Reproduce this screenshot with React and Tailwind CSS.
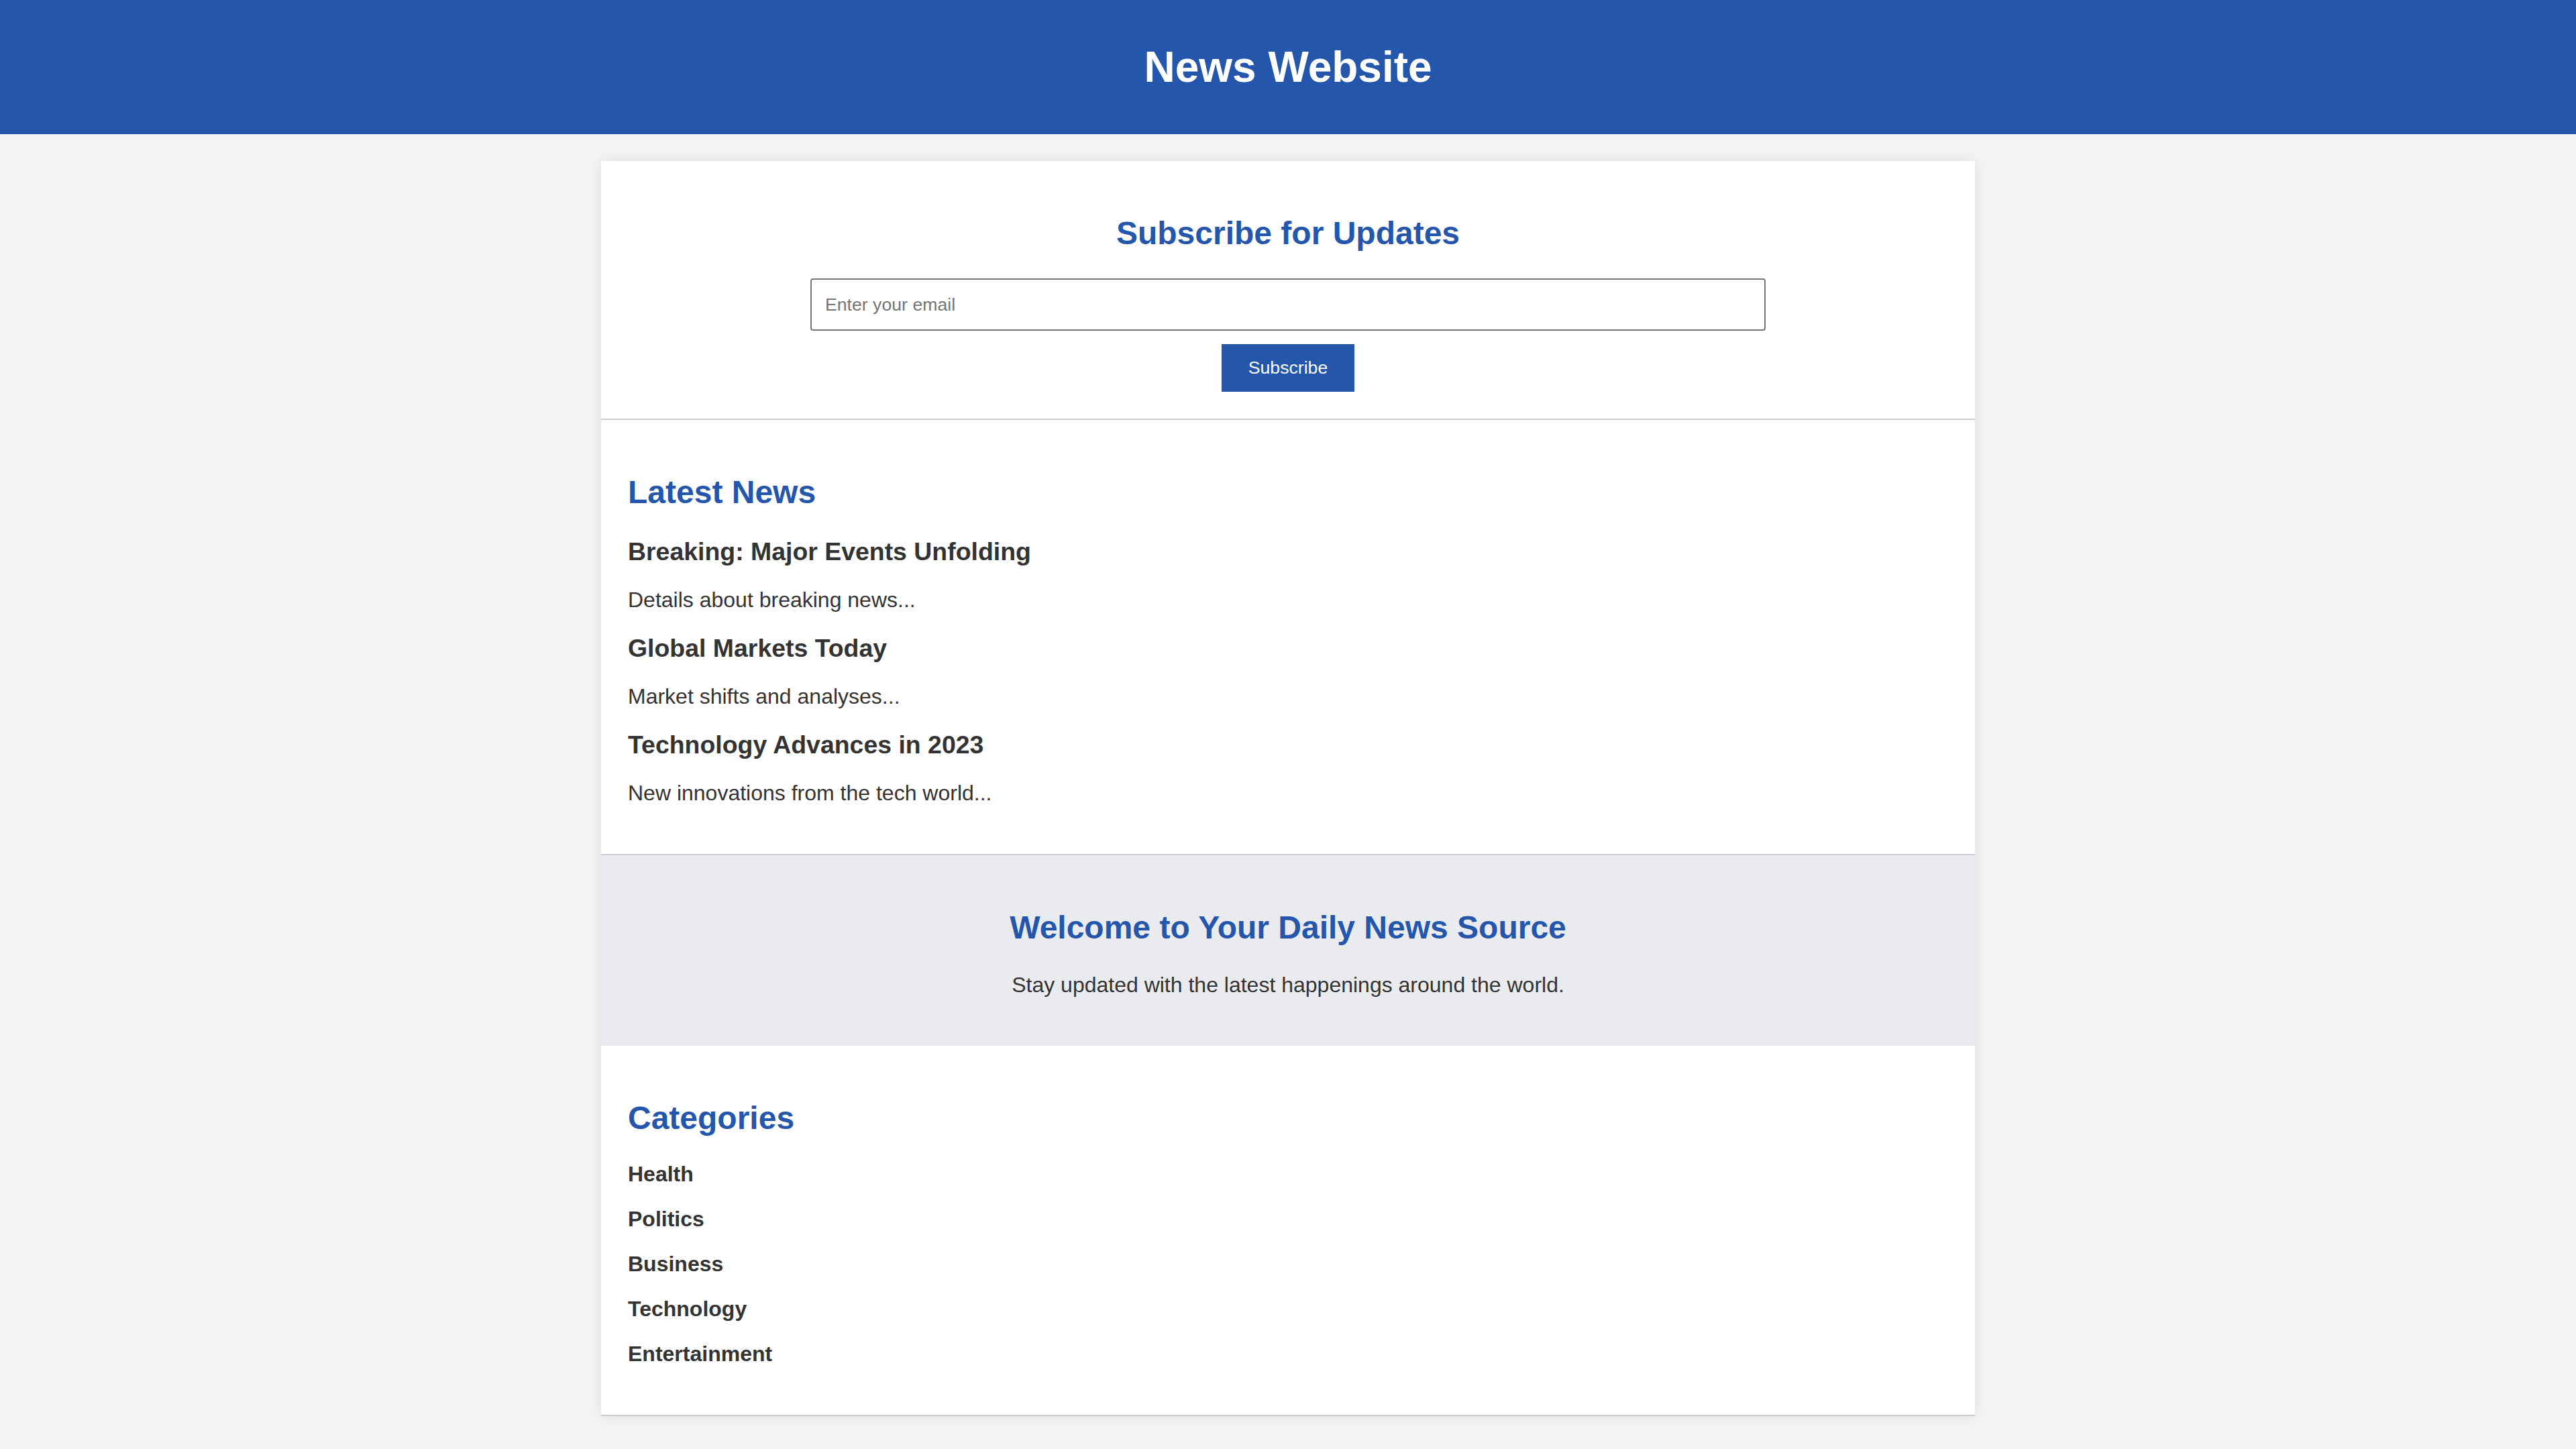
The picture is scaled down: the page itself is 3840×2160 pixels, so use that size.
export default function App() {
  const news = [
    ["Breaking: Major Events Unfolding", "Details about breaking news..."],
    ["Global Markets Today", "Market shifts and analyses..."],
    ["Technology Advances in 2023", "New innovations from the tech world..."],
  ];
  const cats = ["Health", "Politics", "Business", "Technology", "Entertainment"];
  return (
    <div className="min-h-screen bg-[#f4f4f4] font-['Liberation_Sans',Arial,sans-serif] leading-[normal] text-[#333333]">
      <header className="h-[200px] bg-[#2456ac] flex items-center justify-center">
        <h1 className="text-[64px] font-bold text-white leading-[normal]">News Website</h1>
      </header>
      <main className="w-[2048px] mx-auto mt-[40px] bg-white shadow-[0_0_20px_rgba(0,0,0,0.1)]">
        <section className="p-[40px] text-center border-b-2 border-[#cccccc]">
          <h2 className="mt-[40px] mb-[40px] text-[48px] font-bold text-[#2456ac]">Subscribe for Updates</h2>
          <input
            type="email"
            placeholder="Enter your email"
            className="block mx-auto w-[1424px] h-[78px] px-[20px] border-2 border-[#767676] rounded-[4px] text-[26.67px] placeholder:text-[#757575] bg-white outline-none"
          />
          <button className="mt-[20px] bg-[#2456ac] text-white text-[26.67px] px-[40px] py-[20px] leading-[normal]">
            Subscribe
          </button>
        </section>
        <section className="p-[40px] border-b-2 border-[#cccccc]">
          <h2 className="mt-[40px] mb-[40px] text-[48px] font-bold text-[#2456ac]">Latest News</h2>
          <div className="flex flex-col">
            {news.map(([t, d], i) => (
              <article key={i}>
                <h3 className="text-[37.44px] font-bold text-[#333333]">{t}</h3>
                <p className="mt-[32px] mb-[32px] text-[32px]">{d}</p>
              </article>
            ))}
          </div>
        </section>
        <section className="p-[40px] text-center bg-[#e9ebee]">
          <h2 className="mt-[40px] mb-[40px] text-[48px] font-bold text-[#2456ac]">Welcome to Your Daily News Source</h2>
          <p className="mb-[32px] text-[32px]">Stay updated with the latest happenings around the world.</p>
        </section>
        <section className="p-[40px] border-b-2 border-[#cccccc]">
          <h2 className="mt-[40px] mb-[38px] text-[48px] font-bold text-[#2456ac]">Categories</h2>
          <ul className="mb-[32px] flex flex-col gap-[30px]">
            {cats.map((c) => (
              <li key={c} className="text-[32px] font-bold text-[#333333]">{c}</li>
            ))}
          </ul>
        </section>
      </main>
      <div className="h-[40px]" />
    </div>
  );
}
